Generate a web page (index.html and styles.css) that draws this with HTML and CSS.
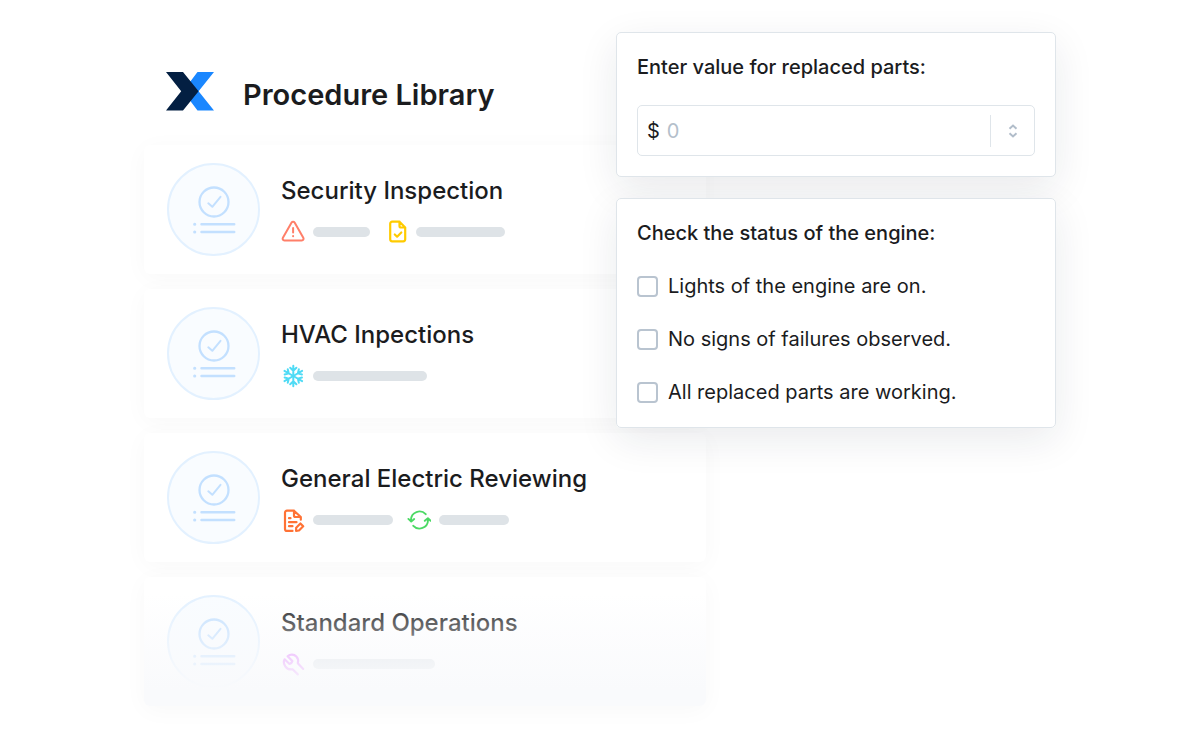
FILE: index.html
```html
<!DOCTYPE html>
<html lang="en">
<head>
<meta charset="utf-8">
<meta name="viewport" content="width=device-width, initial-scale=1">
<title>Procedure Library</title>
<link rel="stylesheet" href="styles.css">
</head>
<body>
<svg class="sprite" aria-hidden="true">
  <symbol id="checklist" viewBox="0 0 44 48">
    <g fill="none" stroke="currentColor" stroke-linecap="round" stroke-linejoin="round">
      <circle cx="22" cy="16" r="14.5" stroke-width="2.3"/>
      <path d="M16.3 17.3l4 3.5 8.2-10" stroke-width="2"/>
      <path d="M9.500 38.300h32.700M9.500 46h32.700" stroke-width="2.500"/>
      <path d="M2.600 38.300h.2M2.600 46h.2" stroke-width="3"/>
    </g>
  </symbol>
</svg>
<main class="stage">
  <section class="library">
    <header class="library-header">
      <svg class="logo" viewBox="0 0 48 39" role="img" aria-label="Logo">
        <path fill="#1a87ff" d="M31.5 0H48L32.6 19.3 48 38.6H31.5L17 19.3z"/>
        <path fill="#031f42" d="M0 0h17l15.600 19.300L17 38.600H0l15.200-19.300z"/>
      </svg>
      <h1 class="library-title">Procedure Library</h1>
    </header>
    <ul class="cards">
      <li class="card">
        <span class="badge"><svg class="badge-icon"><use href="#checklist"/></svg></span>
        <div class="card-body">
          <h2 class="card-title">Security Inspection</h2>
          <div class="tags">
            <span class="tag">
              <svg class="icon coral" viewBox="0 0 24 24"><path d="M10.600 2.600 1.900 17.700c-.7 1.300 0 2.700 1.500 2.700h17.400c1.500 0 2.200-1.400 1.500-2.700L13.600 2.600c-.7-1.200-2.300-1.200-3 0zM12.100 8v4.600M12.100 16v.2" stroke-width="2"/></svg>
              <span class="bar" style="width:57px"></span>
            </span>
            <span class="tag">
              <svg class="icon yellow" viewBox="0 0 24 24"><path d="M15.500 1.700H8.200a2 2 0 0 0-2 2v15.600a2 2 0 0 0 2 2h11a2 2 0 0 0 2-2V7.500zM15.500 1.700V6A1.500 1.500 0 0 0 17 7.500h4.200M10.800 14.500l2.300 2.200 4.200-4.200" stroke-width="2.200"/></svg>
              <span class="bar" style="width:89px"></span>
            </span>
          </div>
        </div>
      </li>
      <li class="card">
        <span class="badge"><svg class="badge-icon"><use href="#checklist"/></svg></span>
        <div class="card-body">
          <h2 class="card-title">HVAC Inpections</h2>
          <div class="tags">
            <span class="tag">
              <svg class="icon cyan" viewBox="0 0 24 24">
                <g id="arm" stroke-width="2"><path d="M12.300 12V1.800M9.200 3.800l3.100 3 3.100-3"/></g>
                <use href="#arm" transform="rotate(60 12.300 12)"/>
                <use href="#arm" transform="rotate(120 12.300 12)"/>
                <use href="#arm" transform="rotate(180 12.300 12)"/>
                <use href="#arm" transform="rotate(240 12.300 12)"/>
                <use href="#arm" transform="rotate(300 12.300 12)"/>
              </svg>
              <span class="bar" style="width:114px"></span>
            </span>
          </div>
        </div>
      </li>
      <li class="card">
        <span class="badge"><svg class="badge-icon"><use href="#checklist"/></svg></span>
        <div class="card-body">
          <h2 class="card-title">General Electric Reviewing</h2>
          <div class="tags">
            <span class="tag">
              <svg class="icon orange" viewBox="0 0 24 24"><path d="M13 2.700H6a2 2 0 0 0-2 2v16.200a2 2 0 0 0 2 2h5.500M13 2.700l6.800 6.300v2.700M13 2.700v4.800A1.500 1.500 0 0 0 14.500 9h5.300M8 10.200h1.500M8 14.200h7.500M8 18.200h3.500M15.200 19.700l4.200-4.200 2.800 2.800-4.200 4.200-2.900.3z" stroke-width="2.200"/></svg>
              <span class="bar" style="width:80px"></span>
            </span>
            <span class="tag">
              <svg class="icon green" viewBox="0 0 24 24"><path d="M4 13.200v-1.400a8.500 8.500 0 0 1 14.700-5.600M1.400 10.900 4.200 13.600 7.200 11M21 10.800v1.400a8.500 8.500 0 0 1-14.700 5.600M17.800 12.800l3.100-2.600 2.700 2.600" stroke-width="1.900"/></svg>
              <span class="bar" style="width:70px"></span>
            </span>
          </div>
        </div>
      </li>
      <li class="card card-fading">
        <span class="badge"><svg class="badge-icon"><use href="#checklist"/></svg></span>
        <div class="card-body">
          <h2 class="card-title">Standard Operations</h2>
          <div class="tags">
            <span class="tag">
              <svg class="icon violet" viewBox="0 0 24 24"><path d="M16.800 22.400l-5.200-5.100c-2.700.5-5.600-.4-7.100-2.700-1.700-2.300-2.100-5-.9-7.300l4.900 4.700c1.400-.4 2.500-1.500 2.900-2.900L6.600 4.300C9.200 2 13 2.100 15.300 4.500c1.700 1.800 2.300 4.400 1.500 6.700l5.400 5.700" stroke-width="2.200"/></svg>
              <span class="bar" style="width:122px"></span>
            </span>
          </div>
        </div>
      </li>
    </ul>
  </section>
  <form class="panels">
    <section class="panel">
      <label class="panel-title" for="value">Enter value for replaced parts:</label>
      <div class="amount">
        <span class="currency">$</span>
        <input class="amount-input" id="value" type="text" inputmode="decimal" placeholder="0">
        <button class="stepper" type="button" aria-label="Change value">
          <svg class="stepper-icon" viewBox="0 0 10 14"><path d="M1.500 4.800 5 1.600l3.500 3.200M1.500 9.200 5 12.400l3.500-3.200"/></svg>
        </button>
      </div>
    </section>
    <fieldset class="panel">
      <legend class="panel-title">Check the status of the engine:</legend>
      <div class="checks">
        <label class="check"><input class="box" type="checkbox"><span>Lights of the engine are on.</span></label>
        <label class="check"><input class="box" type="checkbox"><span>No signs of failures observed.</span></label>
        <label class="check"><input class="box" type="checkbox"><span>All replaced parts are working.</span></label>
      </div>
    </fieldset>
  </form>
</main>
</body>
</html>
```
FILE: styles.css
```css
*, *::before, *::after { box-sizing: border-box; }

body {
  margin: 0;
  background: #fff;
  color: #1b1c1e;
  font-family: Inter, "Liberation Sans", sans-serif;
}

.sprite { position: absolute; width: 0; height: 0; }

.stage {
  display: grid;
  grid-template-columns: minmax(0, 1fr);
  align-items: start;
  max-width: 912px;
  margin: 0 auto;
  padding: 32px 0;
}

.library {
  grid-area: 1 / 1;
  max-width: 562px;
  padding-top: 40px;
}

.library-header {
  display: flex;
  align-items: flex-end;
  gap: 29px;
  margin-bottom: 34px;
  padding-left: 22px;
}

.logo { width: 48px; height: 39px; }

.library-title {
  margin: 0;
  font-size: 29px;
  font-weight: 600;
  line-height: 32px;
}

.cards {
  display: flex;
  flex-direction: column;
  gap: 15px;
  margin: 0;
  padding: 0;
  list-style: none;
}

.card {
  position: relative;
  display: flex;
  align-items: center;
  gap: 21px;
  min-height: 129px;
  padding: 16px 23px;
  border-radius: 6px;
  background: #fff;
  box-shadow: 0 4px 24px rgba(0, 0, 0, 0.03);
}

.card-fading::after {
  content: "";
  position: absolute;
  inset: 0;
  border-radius: inherit;
  background: linear-gradient(rgba(249, 250, 252, 0) 16px, #f9fafc 112px);
}

.badge {
  flex: none;
  display: grid;
  place-items: center;
  width: 93px;
  height: 93px;
  border: 2px solid #e3f1ff;
  border-radius: 50%;
  background: #f9fcff;
  color: #c3e0ff;
}

.badge-icon { width: 44px; height: 48px; }

.card-body {
  display: flex;
  flex-direction: column;
  gap: 14px;
}

.card-title {
  margin: 0;
  font-size: 24px;
  font-weight: 500;
  line-height: 30px;
}

.tags { display: flex; gap: 14px; }

.tag { display: flex; align-items: center; gap: 8px; }

.icon {
  width: 24px;
  height: 24px;
  fill: none;
  stroke: currentColor;
  stroke-linecap: round;
  stroke-linejoin: round;
}

.coral { color: #ff7f69; }
.yellow { color: #ffcb00; }
.cyan { color: #4fdbf5; }
.orange { color: #ff7235; }
.green { color: #4bd964; }
.violet { color: #e27bff; }

.bar {
  height: 10px;
  border-radius: 5px;
  background: #dee3e7;
}

.panels {
  grid-area: 1 / 1;
  justify-self: end;
  z-index: 1;
  display: flex;
  flex-direction: column;
  gap: 21px;
  width: 100%;
  max-width: 440px;
}

.panel {
  min-width: 0;
  margin: 0;
  padding: 20px;
  border: 1px solid #dfe5ea;
  border-radius: 5px;
  background: #fff;
  box-shadow: 0 12px 40px rgba(20, 28, 60, 0.09);
}

.panel-title {
  display: block;
  float: left;
  width: 100%;
  margin-bottom: 24px;
  padding: 0;
  font-size: 20px;
  font-weight: 500;
  line-height: 28px;
}

.amount {
  clear: both;
  display: flex;
  align-items: center;
  height: 51px;
  padding-left: 9px;
  border: 1px solid #dfe5ea;
  border-radius: 5px;
  font-size: 20px;
}

.currency { margin-right: 7px; }

.amount-input {
  flex: 1;
  min-width: 0;
  padding: 0;
  border: 0;
  outline: 0;
  background: none;
  color: inherit;
  font: inherit;
}

.amount-input::placeholder { color: #b4bfcb; opacity: 1; }

.stepper {
  display: grid;
  place-items: center;
  width: 44px;
  height: 32px;
  padding: 0;
  border: 0;
  border-left: 1px solid #dfe5ea;
  background: none;
  color: #b1bdca;
}

.stepper-icon {
  width: 10px;
  height: 14px;
  fill: none;
  stroke: currentColor;
  stroke-width: 2;
}

.checks {
  clear: both;
  display: flex;
  flex-direction: column;
  gap: 23px;
}

.check {
  display: flex;
  align-items: center;
  gap: 10px;
  font-size: 20px;
  line-height: 30px;
}

.box {
  appearance: none;
  flex: none;
  width: 21px;
  height: 21px;
  margin: 0;
  border: 2px solid #b9c4d0;
  border-radius: 4px;
  background: #fff;
}

.box:checked { background: #1a87ff; }
```
